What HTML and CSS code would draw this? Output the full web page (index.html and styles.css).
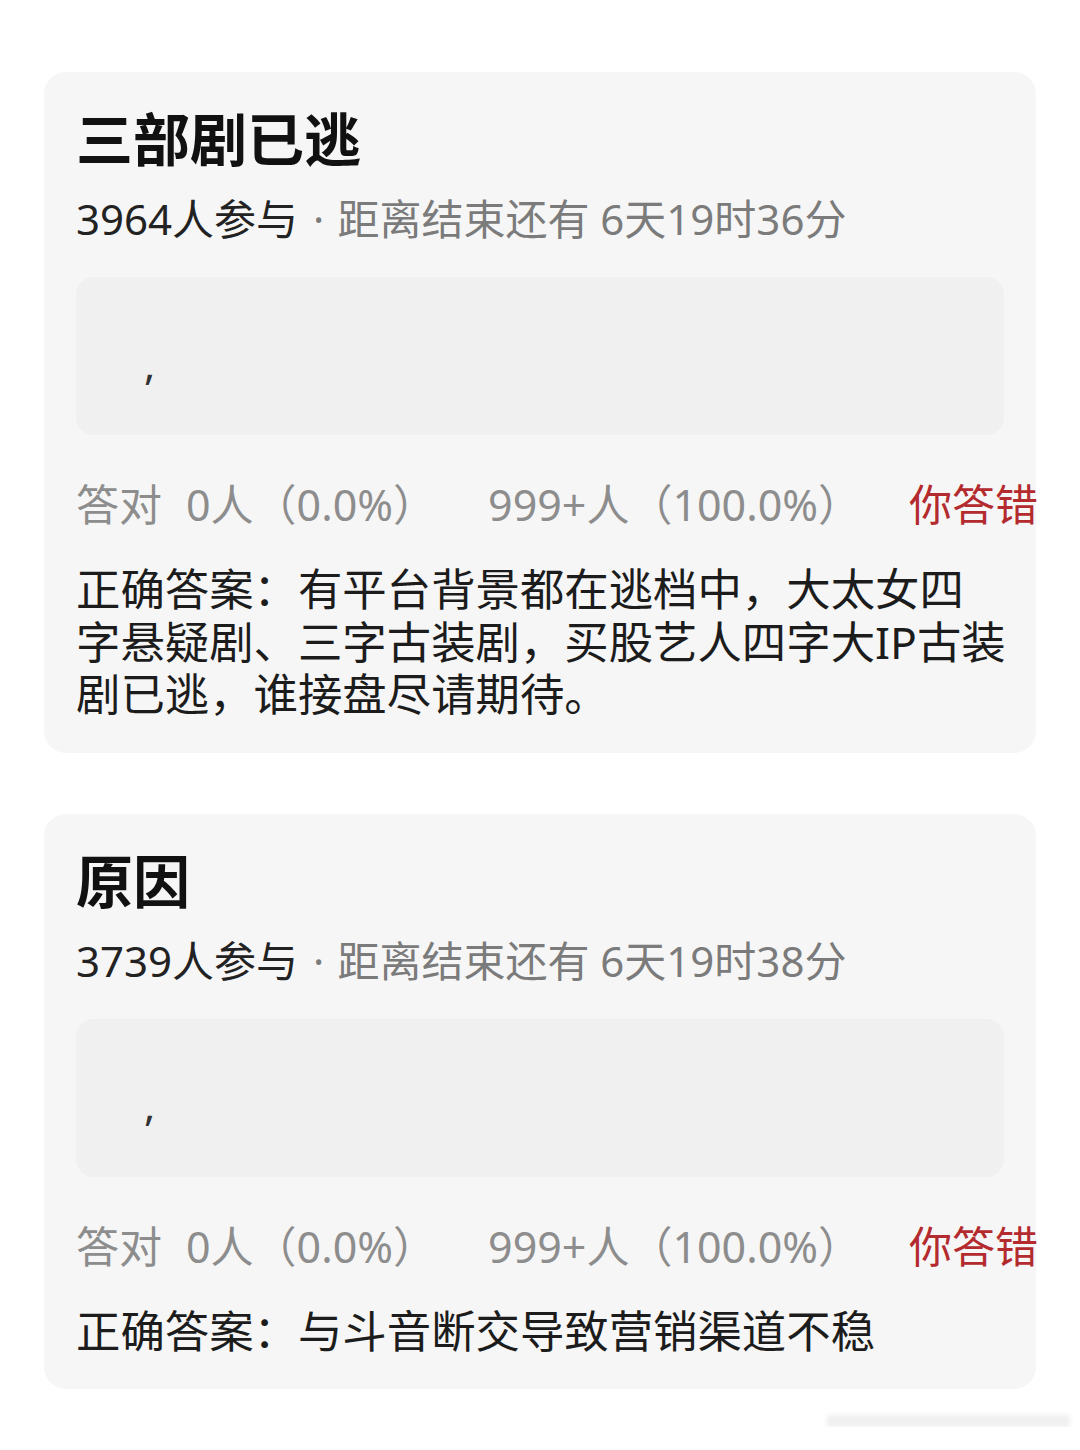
FILE: index.html
```html
<!DOCTYPE html>
<html lang="zh-CN">
<head>
    <meta charset="UTF-8">
    <meta name="viewport" content="width=device-width, initial-scale=1.0">
    <title>竞猜结果</title>
    <link rel="stylesheet" href="styles.css">
</head>
<body>
    <div class="page">
        <section class="card">
            <h2 class="card-title">三部剧已逃</h2>
            <p class="card-meta"><span class="count">3964人参与</span><span class="dot">·</span>距离结束还有 6天19时36分</p>
            <div class="answer-box"><span class="my-answer">,</span></div>
            <div class="stats">
                <span class="stat-label">答对</span>
                <span class="stat-right">0人（0.0%）</span>
                <span class="stat-wrong">999+人（100.0%）</span>
                <span class="result">你答错</span>
            </div>
            <p class="correct">正确答案：有平台背景都在逃档中，大太女四<br>字悬疑剧、三字古装剧，买股艺人四字大IP古装<br>剧已逃，谁接盘尽请期待。</p>
        </section>

        <section class="card">
            <h2 class="card-title">原因</h2>
            <p class="card-meta"><span class="count">3739人参与</span><span class="dot">·</span>距离结束还有 6天19时38分</p>
            <div class="answer-box"><span class="my-answer">,</span></div>
            <div class="stats">
                <span class="stat-label">答对</span>
                <span class="stat-right">0人（0.0%）</span>
                <span class="stat-wrong">999+人（100.0%）</span>
                <span class="result">你答错</span>
            </div>
            <p class="correct">正确答案：与斗音断交导致营销渠道不稳</p>
        </section>

        <div class="mark"></div>
    </div>
</body>
</html>
```

FILE: styles.css
```css
body {
    margin: 0;
    background-color: #fff;
    font-family: "Noto Sans", "Noto Sans CJK SC", sans-serif;
    color: #1c1c1c;
}

.page {
    padding: 72px 44px 0;
    display: flex;
    flex-direction: column;
    gap: 61px;
}

.card {
    background-color: #f6f6f6;
    border-radius: 22px;
    padding: 32px;
}

.card-title {
    margin: 0;
    font-size: 57px;
    line-height: 70px;
    font-weight: 700;
    color: #111;
}

.card-meta {
    margin: 20px 0 0;
    font-size: 42px;
    line-height: 50px;
    color: #7b7b7b;
    white-space: nowrap;
}

.count {
    color: #222;
}

.dot {
    margin: 0 13px 0 15px;
}

.answer-box {
    margin-top: 33px;
    height: 158px;
    border-radius: 18px;
    background-color: #f0f0f0;
    display: flex;
    align-items: center;
    padding-left: 68px;
}

.my-answer {
    font-size: 42px;
    margin-top: 14px;
    color: #333;
}

.stats {
    margin: 44px -34px 0 0;
    display: flex;
    align-items: center;
    font-size: 43px;
    line-height: 52px;
    color: #8d8d8d;
    white-space: nowrap;
}

.stat-label {
    margin-right: 24px;
}

.stat-right {
    margin-right: 52px;
}

.result {
    margin-left: auto;
    color: #b42b2f;
}

.correct {
    margin: 32px -30px 0 0;
    font-size: 44.4px;
    line-height: 52.5px;
    color: #1c1c1c;
    white-space: nowrap;
}

.mark {
    align-self: flex-end;
    width: 243px;
    height: 12px;
    margin: -35px -34px 0 0;
    background-color: #f0f0f0;
    filter: blur(2px);
}
```
